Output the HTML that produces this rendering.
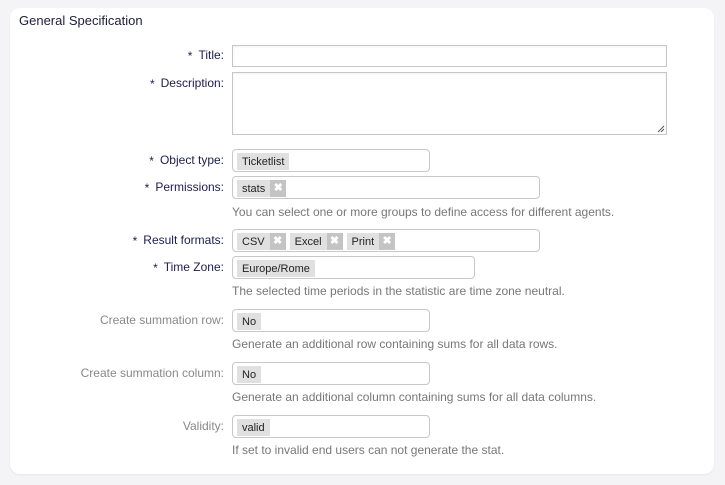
<!DOCTYPE html>
<html><head><style>
body{margin:0;background:#f4f4f6;font-family:"Liberation Sans",Arial,sans-serif;font-size:12px;width:725px;height:485px;overflow:hidden;position:relative}
.card{position:absolute;left:10px;top:8px;width:704px;height:466px;background:#fff;border-radius:10px;box-shadow:0 1px 2px rgba(0,0,0,.06)}
.h{position:absolute;left:19px;top:13px;font-size:13px;color:#1b1e3a}
.l{position:absolute;right:501px;font-size:12px;color:#1c1c50;white-space:nowrap}
.l.o{color:#888}
.l b{font-weight:normal;color:#1c1c50;margin-right:6px;font-size:12px;position:relative;top:1px}
.f{position:absolute;left:232px;box-sizing:border-box;border:1px solid #c8c8c8;border-radius:4px;background:#fff;height:23px}
.f.sq{border-radius:0;border-color:#c6c6c6;box-shadow:inset 0 1px 2px rgba(0,0,0,.06)}
.t{display:inline-block;background:#e0e0e0;color:#222;font-size:11px;height:17px;line-height:18px;padding:0 5px;margin:3px 0 0 4px;vertical-align:top}
.x{display:inline-block;background:#c4c4c4;color:#fff;width:16px;height:17px;line-height:17px;text-align:center;margin-top:3px;vertical-align:top;font-size:11px;font-weight:bold}
.hp{position:absolute;left:232px;color:#777;font-size:12px}
</style></head><body>
<div class="card"></div>
<div class="h">General Specification</div>

<div class="l" style="top:48px"><b>*</b>Title:</div>
<div class="f sq" style="top:45px;width:435px;height:22px"></div>
<div class="l" style="top:76px"><b>*</b>Description:</div>
<div class="f sq" style="top:72px;width:435px;height:63px"><svg style="position:absolute;right:1px;bottom:1px" width="8" height="8"><path d="M1 7L7 1M4 7L7 4" stroke="#555" stroke-width="1"/></svg></div>

<div class="l" style="top:153px"><b>*</b>Object type:</div>
<div class="f" style="top:149px;width:198px"><span class="t">Ticketlist</span></div>
<div class="l" style="top:180px"><b>*</b>Permissions:</div>
<div class="f" style="top:176px;width:308px"><span class="t">stats</span><span class="x">✖</span></div>
<div class="hp" style="top:205px">You can select one or more groups to define access for different agents.</div>

<div class="l" style="top:233px"><b>*</b>Result formats:</div>
<div class="f" style="top:229px;width:308px"><span class="t">CSV</span><span class="x">✖</span><span class="t">Excel</span><span class="x">✖</span><span class="t">Print</span><span class="x">✖</span></div>
<div class="l" style="top:260px"><b>*</b>Time Zone:</div>
<div class="f" style="top:256px;width:243px"><span class="t">Europe/Rome</span></div>
<div class="hp" style="top:284px">The selected time periods in the statistic are time zone neutral.</div>

<div class="l o" style="top:313px">Create summation row:</div>
<div class="f" style="top:309px;width:198px"><span class="t">No</span></div>
<div class="hp" style="top:337px">Generate an additional row containing sums for all data rows.</div>

<div class="l o" style="top:366px">Create summation column:</div>
<div class="f" style="top:362px;width:198px"><span class="t">No</span></div>
<div class="hp" style="top:390px">Generate an additional column containing sums for all data columns.</div>

<div class="l o" style="top:419px">Validity:</div>
<div class="f" style="top:415px;width:198px"><span class="t">valid</span></div>
<div class="hp" style="top:443px">If set to invalid end users can not generate the stat.</div>
</body></html>
